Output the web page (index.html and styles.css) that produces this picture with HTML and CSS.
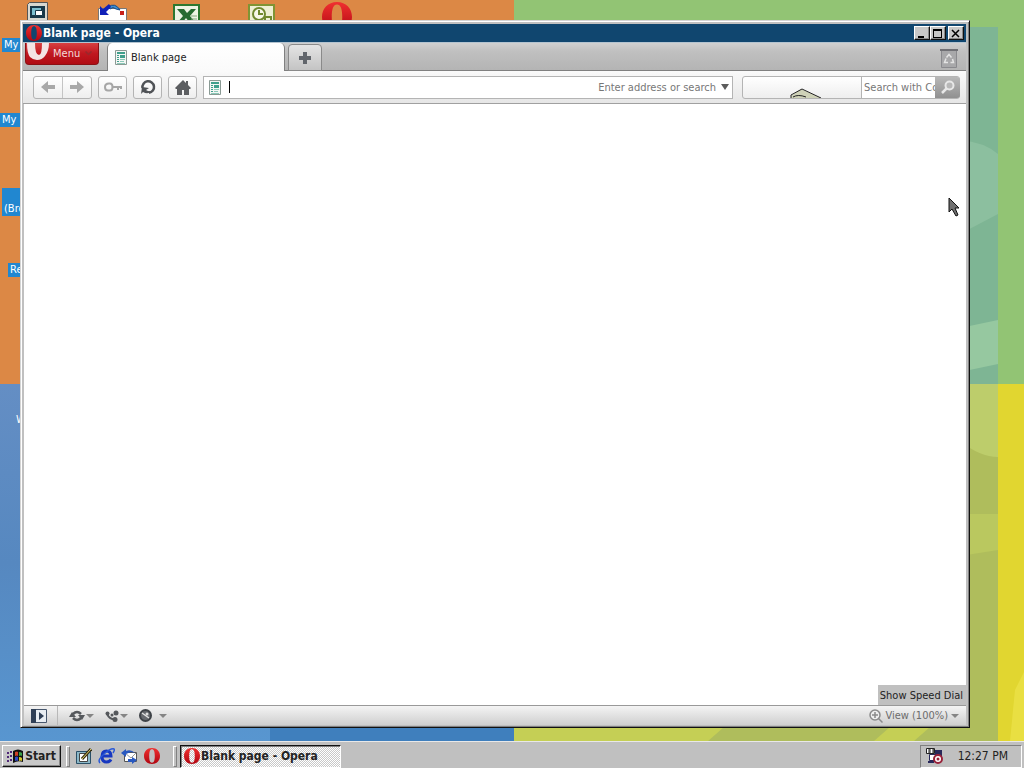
FILE: index.html
```html
<!DOCTYPE html>
<html lang="en">
<head>
    <meta charset="UTF-8">
    <meta name="viewport" content="width=device-width, initial-scale=1.0">
    <title>Blank page - Opera</title>
    <link rel="stylesheet" href="styles.css">
</head>
<body>
    <!-- shared icons -->
    <svg class="defs" aria-hidden="true">
        <defs>
            <linearGradient id="red" x1="0" y1="0" x2="0" y2="1">
                <stop offset="0" stop-color="#f03030"/>
                <stop offset="1" stop-color="#b00510"/>
            </linearGradient>
            <symbol id="opera" viewBox="0 0 16 16">
                <path fill="url(#red)" fill-rule="evenodd" d="M8 0C3.200 0 0 3.500 0 8s3.200 8 8 8 8-3.500 8-8-3.200-8-8-8zM8 1.300c2 0 2.800 2.500 2.800 6.700S10 14.700 8 14.700 5.200 12.200 5.200 8 6 1.300 8 1.300z"/>
            </symbol>
            <symbol id="page" viewBox="0 0 12 15">
                <path fill="#f4f6f4" stroke="#8a9a94" d="M.5.5h11v14H.5z"/>
                <path fill="#3f9f8c" d="M2 2h8v2H2zM2 5h2v1H2zM2 7h2v1H2zM2 9h2v1H2zM2 11h2v1H2zM5 5h5v3H5z"/>
                <path fill="#8ac8b8" d="M5 9h5v1H5zM5 11h4v1H5zM2 13h8v1H2z"/>
            </symbol>
        </defs>
    </svg>

    <main class="desktop">
        <svg class="wallpaper" viewBox="0 0 1024 741" preserveAspectRatio="none" aria-hidden="true">
            <defs>
                <linearGradient id="blue" x1="0" y1="0" x2="0" y2="1">
                    <stop offset="0" stop-color="#648ec4"/>
                    <stop offset=".5" stop-color="#5688c0"/>
                    <stop offset="1" stop-color="#5896d0"/>
                </linearGradient>
            </defs>
            <path fill="#dc8845" d="M0 0h514v384H0z"/>
            <path fill="#92c474" d="M514 0h510v384H514z"/>
            <path fill="url(#blue)" d="M0 384h514v357H0z"/>
            <path fill="#3f7fbd" d="M270 727h244v14H270z"/>
            <path fill="#afbd5c" d="M514 384h484v357H514z"/>
            <path fill="#e1d630" d="M998 384h26v357h-26z"/>
            <path fill="#7eb594" d="M960 27h38v357h-38z"/>
            <path fill="#8cbf9f" d="M960 140q24 2 38 14v60l-38 20z"/>
            <path fill="#96c8a0" d="M960 328l38-8v44l-38 8z"/>
            <path fill="#bdcd6b" d="M960 384h38v73q-18 0-38-16z"/>
            <path fill="#bac85f" d="M960 514h38v36l-38 6z"/>
            <path fill="#c5cf55" d="M514 727h210l-16 14H514zM890 727h40l-16 14h-40z"/>
            <path fill="#e9df42" d="M1015 690l9-18v69h-14z"/>
        </svg>

        <div class="shortcut at-computer">
            <svg width="22" height="20" viewBox="0 0 22 20"><path fill="#d8d8d0" stroke="#555" d="M.5 2.500l2-2h18v19H.5z"/><path fill="#183848" d="M3 4h15v12H3z"/><path fill="#7cc0d0" d="M5 6h9v7H5z"/><path fill="#fff" stroke="#183848" d="M8.500 8.500h7v5h-7z"/></svg>
        </div>
        <div class="shortcut at-mail">
            <svg width="32" height="20" viewBox="0 0 32 20"><path fill="#fff" stroke="#777" d="M1.500 6.500h28v15h-28z"/><path fill="#c82018" d="M23 9h4v4h-4z"/><path fill="#3c8fd0" stroke="#174a88" d="M11 5q7-5 12 3l-4-1q-3-3-6 0z"/><path fill="#1020b8" d="M3 4l3 3 6-5 2 3-5 5 3 3H3z"/></svg>
        </div>
        <div class="shortcut at-excel">
            <svg width="27" height="18" viewBox="0 0 27 18"><path fill="#eef4e4" stroke="#2d7830" stroke-width="2" d="M1 1h25v22H1z"/><path fill="#276b30" d="M4 5h7l3 4 4-4h5l-6 7 6 7h-6l-4-5-4 5H4l6-7z"/><path stroke="#86a880" d="M18 12h6M18 15h6"/></svg>
        </div>
        <div class="shortcut at-outlook">
            <svg width="27" height="18" viewBox="0 0 27 18"><path fill="#eef0d4" stroke="#7f9434" stroke-width="2" d="M1 1h25v22H1z"/><circle cx="11" cy="10" r="6" fill="#f8f8e8" stroke="#70892e" stroke-width="2"/><path fill="none" stroke="#70892e" stroke-width="2" d="M11 6v4h4M17 18v-5h6v5"/></svg>
        </div>
        <div class="shortcut at-opera">
            <svg width="30" height="30"><use href="#opera"/></svg>
        </div>
        <span class="label at-label-1">My</span>
        <span class="label at-label-2">My I</span>
        <span class="label tall at-label-3">(Bro</span>
        <span class="label at-label-4">Re</span>
        <span class="label at-label-5">W</span>

        <section class="window">
            <header class="titlebar">
                <svg width="16" height="16"><use href="#opera"/></svg>
                <h1>Blank page - Opera</h1>
                <div class="window-buttons">
                    <button aria-label="Minimize"><svg width="14" height="11" viewBox="0 0 14 11"><path d="M3 8h6v2H3z"/></svg></button>
                    <button aria-label="Maximize"><svg width="14" height="11" viewBox="0 0 14 11"><path fill-rule="evenodd" d="M2 1h9v9H2zM3 3v6h7V3z"/></svg></button>
                    <button class="close" aria-label="Close"><svg width="14" height="11" viewBox="0 0 14 11"><path fill="none" stroke="#000" stroke-width="1.500" d="M3 2l7 7M10 2l-7 7"/></svg></button>
                </div>
            </header>

            <nav class="tabbar">
                <button class="menu-button">
                    <svg width="25" height="20" viewBox="0 0 25 20"><path fill="#f4e4e4" fill-rule="evenodd" d="M1 0h22q0 8-4 13-3 4-8 4-4 0-7-3Q1 10 1 0zM9 0q0 12 4 12 3 0 3-12z"/></svg>
                    Menu
                    <svg class="chevron" width="7" height="5" viewBox="0 0 7 5"><path fill="none" stroke="#98282c" stroke-width="1.500" d="M.5.5l3 3 3-3"/></svg>
                </button>
                <button class="tab">
                    <svg width="12" height="15"><use href="#page"/></svg>
                    Blank page
                </button>
                <button class="new-tab" aria-label="New tab">
                    <svg width="12" height="12" viewBox="0 0 12 12"><path fill="#62666c" d="M4 0h4v4h4v4H8v4H4V8H0V4h4z"/></svg>
                </button>
                <button class="trash" aria-label="Closed tabs">
                    <svg width="18" height="19" viewBox="0 0 18 19"><path fill="#a8a8aa" stroke="#8a8a8e" d="M1.500 1.500h15v17h-15z"/><path stroke="#707075" stroke-width="2" d="M0 1h18"/><path fill="none" stroke="#e4e4e4" stroke-width="1.500" d="M6.500 8.500l2.500-3 2.500 3M12.500 10l1 3.500h-3M8 13.500H4.500l1.500-4"/></svg>
                </button>
            </nav>

            <div class="toolbar">
                <div class="button-group">
                    <button aria-label="Back"><svg width="14" height="12" viewBox="0 0 14 12"><path fill="#a8a8a8" d="M0 6l7-6v4h7v4H7v4z"/></svg></button>
                    <button aria-label="Forward"><svg width="14" height="12" viewBox="0 0 14 12"><path fill="#a8a8a8" d="M14 6L7 0v4H0v4h7v4z"/></svg></button>
                </div>
                <button class="tool" aria-label="Password manager"><svg width="18" height="10" viewBox="0 0 18 10"><path fill="none" stroke="#a6a6a6" stroke-width="2" d="M5 1.500h1q2.500 0 2.500 3.500T6 8.500H4Q1 8.500 1 5t4-3.500z"/><path fill="#a6a6a6" d="M9 4h9v3h-2V6h-1v2h-2V6H9z"/></svg></button>
                <button class="tool" aria-label="Reload"><svg width="16" height="16" viewBox="0 0 16 16"><path fill="none" stroke="#505357" stroke-width="2.500" d="M2.500 9A5.800 5.800 0 1 1 9 13.800"/><path fill="#505357" d="M2 8l7 1-3 2q3 2 6 1-4 4-9 1l-2 2z"/></svg></button>
                <button class="tool" aria-label="Home"><svg width="16" height="15" viewBox="0 0 16 15"><path fill="#5c5e61" d="M8 0l3 3V1h2v4l3 3-1 1h-1v6H9v-5H7v5H2V9H1L0 8z"/></svg></button>

                <div class="address">
                    <svg width="12" height="15"><use href="#page"/></svg>
                    <span class="caret"></span>
                    <input type="text" aria-label="Address" placeholder="Enter address or search">
                    <svg width="8" height="6" viewBox="0 0 8 6"><path fill="#5c5c5c" d="M0 0h8L4 6z"/></svg>
                </div>

                <div class="search">
                    <div class="search-gap">
                        <svg width="32" height="10" viewBox="0 0 32 10"><path fill="#cfd2b8" d="M1 8L11 1l20 9H1z"/><path fill="none" stroke="#222" d="M1 10V7L12 1l19 9M3 9q5-3 13 0"/></svg>
                    </div>
                    <input type="text" aria-label="Search" placeholder="Search with Co">
                    <button aria-label="Search"><svg width="14" height="14" viewBox="0 0 14 14"><circle cx="8.500" cy="5.500" r="4" fill="#b8b8b8" stroke="#e8e8e8" stroke-width="2"/><path stroke="#e8e8e8" stroke-width="2.500" d="M6 8l-5 5"/></svg></button>
                </div>
            </div>

            <div class="page">
                <button class="speed-dial">Show Speed Dial</button>
            </div>

            <footer class="statusbar">
                <button class="panel-toggle" aria-label="Panels"><svg width="16" height="14" viewBox="0 0 16 14"><path fill="#e8edf2" stroke="#46566c" d="M.5.5h15v13H.5z"/><path fill="#2f3f56" d="M0 0h5v14H0zM8 3l5 4-5 4z"/></svg></button>
                <button class="status-tool" aria-label="Sync"><svg width="16" height="12" viewBox="0 0 16 12"><path fill="none" stroke="#55585c" stroke-width="2.500" d="M4 4q4-4 8 0M4 8q4 4 8 0"/><path fill="#55585c" d="M0 7l3-5 4 5zM16 5l-3 5-4-5z"/></svg><i></i></button>
                <button class="status-tool" aria-label="Unite"><svg width="14" height="12" viewBox="0 0 14 12"><path fill="none" stroke="#55585c" stroke-width="2" d="M2 4q3 6 8 5"/><circle cx="2.500" cy="3.500" r="2" fill="#55585c"/><circle cx="7" cy="5" r="1.500" fill="#55585c"/><circle cx="11" cy="3" r="2.500" fill="#55585c"/><circle cx="10" cy="9.500" r="2.500" fill="#55585c"/></svg><i></i></button>
                <button class="status-tool wide" aria-label="Turbo"><svg width="13" height="13" viewBox="0 0 13 13"><circle cx="6.500" cy="6.500" r="5.500" fill="#66696e" stroke="#3e4247" stroke-width="2"/><path stroke="#e0e0e0" stroke-width="1.500" d="M3 4l7 5"/><circle cx="8" cy="5" r="1.500" fill="#ddd"/></svg><i></i></button>
                <button class="zoom">
                    <svg width="14" height="14" viewBox="0 0 14 14"><circle cx="6" cy="6" r="5" fill="#eee" stroke="#8b8b8b" stroke-width="1.500"/><path stroke="#8b8b8b" stroke-width="1.500" d="M3 6h6M6 3v6M9.500 9.500l4 4"/></svg>
                    View (100%)
                    <i></i>
                </button>
            </footer>
        </section>

        <svg class="cursor" width="12" height="20" viewBox="0 0 12 20" aria-hidden="true"><path fill="#707070" stroke="#111" d="M1 1v14l3-3 4 7 2-1-3-7h4z"/></svg>
    </main>

    <footer class="taskbar">
        <button class="start">
            <svg width="17" height="14" viewBox="0 0 17 14"><path fill="#111" d="M6 2q5-3 10 0v11q-5-2-10 1z"/><path fill="#d04028" d="M8 3q2-1 3 0v4q-1-1-3 0z"/><path fill="#38a048" d="M12 3q2 0 3 1v3q-1-1-3 0z"/><path fill="#3048c8" d="M8 8q2-1 3 0v4q-1-1-3 0z"/><path fill="#d8c828" d="M12 8q2 0 3 1v3q-1-1-3 0z"/><path fill="#502878" d="M0 3h2v2H0zM3 2h2v2H3zM0 7h2v2H0zM3 6h2v2H3zM0 11h2v2H0zM3 10h2v2H3z"/></svg>
            Start
        </button>
        <div class="grip"></div>
        <div class="quick-launch">
            <button aria-label="Show Desktop"><svg width="16" height="16" viewBox="0 0 16 16"><path fill="#8cb8c8" stroke="#2a5068" d="M.5 3.500h14v12H.5z"/><path fill="#fff" stroke="#444" d="M3.500 5.500h8v8h-8z"/><path stroke="#332c10" stroke-width="3" d="M6 11l9-10"/><path stroke="#e8d870" d="M6 11l9-10"/></svg></button>
            <button aria-label="Internet Explorer"><svg width="17" height="16" viewBox="0 0 17 16"><path fill="none" stroke="#1838c0" stroke-width="3" d="M4 8h9q0-5-4.500-5T4 8.500 8.500 14q3 0 4.500-2.500"/><path fill="none" stroke="#2858d8" stroke-width="1.500" d="M2 15Q-1 12 6 6t10-5q1 1-1 4"/></svg></button>
            <button aria-label="Outlook Express"><svg width="17" height="16" viewBox="0 0 17 16"><path fill="#fff" stroke="#555" d="M3.500 4.500h12v9h-12z"/><path fill="none" stroke="#999" d="M4 5l6 5 5-5"/><path fill="#2858c0" d="M0 5l5-4v2q5-2 9 2l-4-1-5 2v3zM16 12l-5 4v-2H7v-3h4V9z"/></svg></button>
            <button aria-label="Opera"><svg width="16" height="16"><use href="#opera"/></svg></button>
        </div>
        <div class="grip"></div>
        <button class="task"><svg width="16" height="16"><use href="#opera"/></svg>Blank page - Opera</button>
        <div class="tray">
            <svg width="17" height="16" viewBox="0 0 17 16"><path fill="#fff" stroke="#222" d="M.5.5h8v5h-8z"/><path stroke="#222" d="M2 2h2M2 4h2M6 2h2M6 4h2M4 1v4M8 1v4"/><path fill="#fff" stroke="#28285a" d="M3.500 6.500h12v6h-12z"/><path fill="#28285a" d="M9 2h7v5H9zM2 13h6v2H2z"/><circle cx="12" cy="11" r="4" fill="#fff" stroke="#982038" stroke-width="2"/><circle cx="12" cy="11" r="1.500" fill="#982038"/></svg>
            <time>12:27 PM</time>
        </div>
    </footer>
</body>
</html>
```

FILE: styles.css
```css
* {
    margin: 0;
    padding: 0;
    box-sizing: border-box;
}

body {
    height: 100vh;
    display: flex;
    flex-direction: column;
    overflow: hidden;
    font-family: Tahoma, "DejaVu Sans Condensed", "Noto Sans", sans-serif;
    font-size: 11px;
    color: #222;
}

button,
input {
    font: inherit;
    color: inherit;
    border: none;
    background: none;
    outline: none;
}

button {
    display: flex;
    align-items: center;
    justify-content: center;
    white-space: nowrap;
}

svg {
    display: block;
    flex: none;
}

.defs {
    position: absolute;
    width: 0;
    height: 0;
}

/* desktop */
.desktop {
    flex: 1;
    position: relative;
    overflow: hidden;
}

.wallpaper {
    width: 100%;
    height: 100%;
}

.shortcut,
.label {
    position: absolute;
}

.at-computer { left: 27px; top: 2px; }
.at-mail { left: 97px; top: 2px; }
.at-excel { left: 173px; top: 4px; }
.at-outlook { left: 248px; top: 4px; }
.at-opera { left: 322px; top: 2px; }

.label {
    padding: 0 2px;
    line-height: 14px;
    color: #fff;
    background: #2187d0;
    white-space: nowrap;
}

.label.tall {
    padding-top: 14px;
}

.at-label-1 { left: 2px; top: 38px; }
.at-label-2 { left: 0; top: 113px; }
.at-label-3 { left: 2px; top: 188px; }
.at-label-4 { left: 8px; top: 263px; }
.at-label-5 { left: 14px; top: 413px; background: none; }

/* browser window */
.window {
    position: absolute;
    top: 20px;
    left: 20px;
    right: 54px;
    bottom: 13px;
    display: flex;
    flex-direction: column;
    padding: 2px 3px 2px 2px;
    background: #c0c0c0;
    border: 1px solid #d4d4d4;
    border-right-color: #111;
    border-bottom-color: #111;
    box-shadow: inset 1px 1px #fff, inset -1px -1px #808080;
}

.titlebar {
    display: flex;
    align-items: center;
    height: 18px;
    padding: 0 2px 0 3px;
    margin-top: 1px;
    background: #10466f;
    color: #fff;
}

.titlebar h1 {
    flex: 1;
    padding-left: 1px;
    font-size: 12px;
    line-height: 18px;
}

.window-buttons {
    display: flex;
}

.window-buttons button,
.start {
    background: #c8c8c8;
    border: 1px solid #fff;
    border-right-color: #111;
    border-bottom-color: #111;
    box-shadow: inset -1px -1px #888;
}

.window-buttons button {
    width: 16px;
    height: 14px;
}

.window-buttons .close {
    margin-left: 2px;
}

.tabbar {
    display: flex;
    height: 29px;
    padding-left: 2px;
    background: linear-gradient(#d0d0d0, #c0c0c0 30%, #b4b4b4);
    border-top: 1px solid #b4c4d0;
    border-bottom: 1px solid #808080;
}

.menu-button {
    align-self: flex-start;
    justify-content: flex-start;
    width: 74px;
    height: 22px;
    gap: 2px;
    color: #f4dcdc;
    background: linear-gradient(#d84040, #c01820 50%, #b00c14);
    border: 1px solid #8c1014;
    border-top: none;
    border-radius: 0 0 4px 4px;
}

.menu-button svg:first-child {
    align-self: flex-start;
}

.chevron {
    margin-left: 3px;
}

.tab {
    justify-content: flex-start;
    gap: 4px;
    width: 178px;
    height: 28px;
    margin-left: 8px;
    padding-left: 7px;
    background: linear-gradient(#fff, #fafafa);
    border-left: 1px solid #808080;
    border-right: 1px solid #808080;
    border-radius: 5px 5px 0 0;
}

.new-tab {
    width: 34px;
    height: 27px;
    margin-top: 1px;
    margin-left: 3px;
    background: linear-gradient(#e4e4e4, #c4c4c4);
    border: 1px solid #8a8a8a;
    border-radius: 4px 4px 0 0;
}

.trash {
    width: 20px;
    margin: 4px 7px 0 auto;
}

.toolbar {
    display: flex;
    align-items: center;
    gap: 6px;
    height: 33px;
    padding: 0 6px 0 10px;
    background: linear-gradient(#fafafa, #e6e6e6);
    border-bottom: 1px solid #a0a0a0;
}

.button-group,
.tool,
.address,
.search {
    height: 23px;
    background: linear-gradient(#fff, #eee);
    border: 1px solid #b4b4b4;
    border-radius: 3px;
}

.button-group {
    display: flex;
    width: 59px;
}

.button-group button {
    flex: 1;
}

.button-group button + button {
    border-left: 1px solid #c4c4c4;
}

.tool {
    width: 29px;
}

.address {
    flex: 1;
    display: flex;
    align-items: center;
    min-width: 0;
    padding: 0 3px 0 5px;
    background: #fff;
    border-radius: 0;
}

.caret {
    width: 1px;
    height: 12px;
    margin-left: 8px;
    background: #000;
}

.address input {
    flex: 1;
    min-width: 0;
    padding-right: 5px;
    text-align: right;
}

input::placeholder {
    color: #777;
    opacity: 1;
}

.search {
    display: flex;
    width: 218px;
    margin-left: 3px;
}

.search-gap {
    flex: 1;
    display: flex;
    align-items: flex-end;
    justify-content: center;
    padding-left: 8px;
}

.search input {
    width: 75px;
    padding-left: 2px;
    background: #fff;
    border-left: 1px solid #b4b4b4;
}

.search button {
    width: 25px;
    margin: 0 -1px;
    background: linear-gradient(#b8b8b8, #909090);
    border-radius: 0 3px 3px 0;
}

.page {
    flex: 1;
    display: flex;
    align-items: flex-end;
    justify-content: flex-end;
    margin-left: 1px;
    background: #fff;
}

.speed-dial {
    height: 20px;
    padding: 0 3px 0 2px;
    background: #c0c0c0;
}

.statusbar {
    display: flex;
    align-items: center;
    height: 20px;
    margin-left: 1px;
    border-top: 1px solid #999;
    background: linear-gradient(#f4f4f4, #cfcfcf);
}

.panel-toggle {
    width: 34px;
    height: 19px;
    padding-right: 4px;
    margin-right: 11px;
    border-right: 1px solid #b8b8b8;
}

.status-tool {
    gap: 1px;
    margin-right: 11px;
}

.status-tool.wide {
    gap: 7px;
}

.statusbar i {
    border: 4px solid transparent;
    border-top-color: #858585;
    border-bottom: none;
}

.zoom {
    gap: 2px;
    margin-left: auto;
    padding-right: 7px;
    color: #6c6c6c;
}

.zoom i {
    margin-left: 1px;
}

.cursor {
    position: absolute;
    top: 197px;
    left: 948px;
}

/* taskbar */
.taskbar {
    display: flex;
    align-items: center;
    height: 27px;
    padding: 2px 2px 0;
    background: #c0c0c0;
    border-top: 1px solid #e8e8e8;
}

.start {
    gap: 1px;
    width: 59px;
    height: 22px;
    font-size: 12px;
    font-weight: bold;
}

.grip {
    width: 4px;
    height: 21px;
    margin: 0 3px 0 5px;
    border: 1px solid #fff;
    border-right-color: #808080;
    border-bottom-color: #808080;
}

.quick-launch {
    display: flex;
    gap: 6px;
    margin: 0 8px 0 3px;
}

.task {
    justify-content: flex-start;
    gap: 1px;
    width: 161px;
    height: 23px;
    padding-left: 3px;
    background: repeating-conic-gradient(#fff 0 25%, #c8c8c8 0 50%) 0 0 / 2px 2px;
    border: 1px solid #fff;
    border-top-color: #111;
    border-left-color: #111;
    font-size: 12px;
    font-weight: bold;
    box-shadow: inset 1px 1px #808080;
}

.tray {
    display: flex;
    align-items: center;
    justify-content: space-between;
    width: 102px;
    height: 23px;
    margin-left: auto;
    padding: 0 13px 0 5px;
    border: 1px solid #fff;
    border-top-color: #808080;
    border-left-color: #808080;
    font-size: 12px;
}
```
